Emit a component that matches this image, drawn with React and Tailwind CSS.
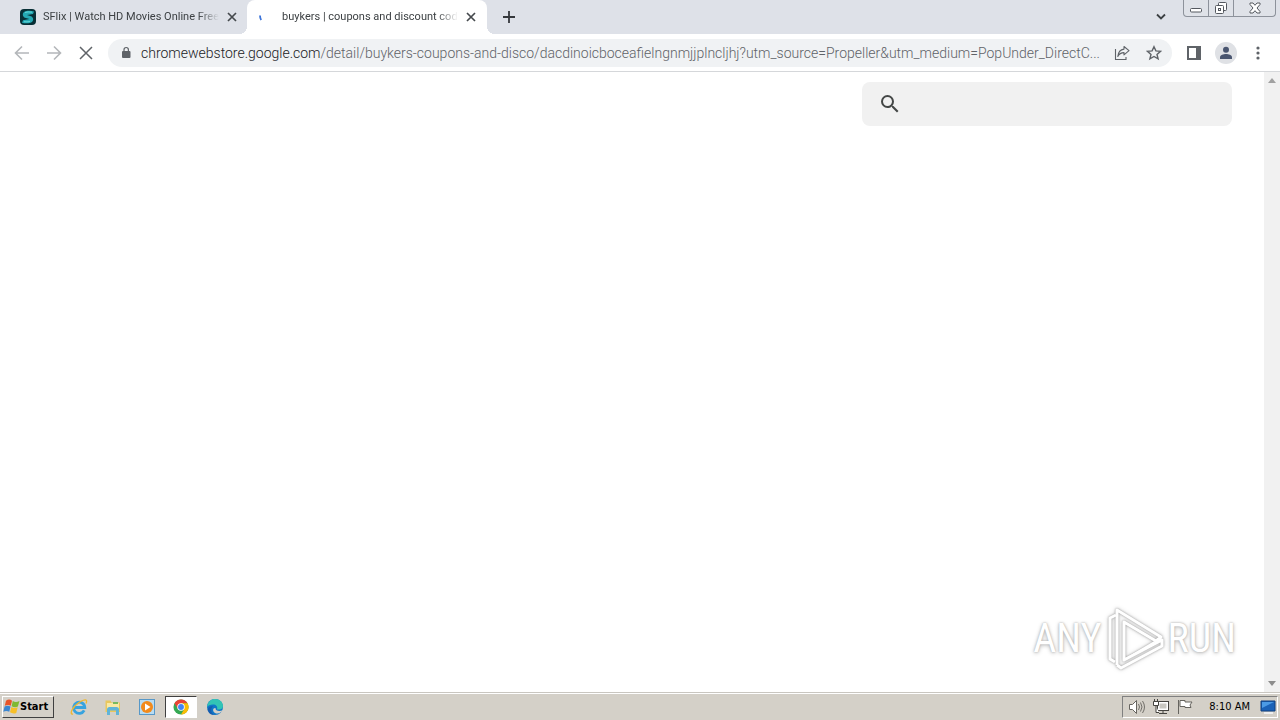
import React from "react";

function Close() {
  return (
    <svg viewBox="0 0 10 10" className="size-[10px]" fill="none" stroke="#45494d" strokeWidth="1.7">
      <path d="M1 1l8 8M9 1l-8 8" />
    </svg>
  );
}

function Tab({ title, icon, active, className }) {
  return (
    <div className={`relative flex h-full items-center ${active ? "rounded-t-lg bg-white" : ""} ${className}`}>
      {active && (
        <>
          <span className="absolute bottom-0 -left-2 size-2 bg-[radial-gradient(circle_at_0_0,transparent_8px,white_8px)]" />
          <span className="absolute bottom-0 -right-2 size-2 bg-[radial-gradient(circle_at_100%_0,transparent_8px,white_8px)]" />
        </>
      )}
      <span className="flex w-4 shrink-0 justify-center">{icon}</span>
      <button
        role="tab"
        aria-selected={!!active}
        className="ml-[7px] w-44 overflow-hidden whitespace-nowrap text-left text-[11px] leading-4 text-[#3c4043] [mask-image:linear-gradient(to_right,black_88%,transparent)]"
      >
        {title}
      </button>
      <button aria-label="Close tab" className="ml-2 flex size-[10px] items-center justify-center">
        <Close />
      </button>
    </div>
  );
}

function SflixIcon() {
  return (
    <svg viewBox="0 0 16 16" className="size-4">
      <rect width="16" height="16" rx="4" fill="#082f36" />
      <path d="M14 2.500C11 1.500 8 1.700 5.500 2.200 2 3 2 7.500 5 8.700L9.500 10 3 11.200 2 13.700c3 .8 6 .6 8.500 0 3.500-1 3.500-5.300.5-6.500L7 6l6-1z" fill="#25a9b4" />
      <path d="M5 3.500q3-1 7-.3M4 12.700q3 .4 6-.2" stroke="#73e0df" strokeWidth=".8" fill="none" />
    </svg>
  );
}

function WindowControls() {
  return (
    <div className="mr-1 flex h-[17px] self-start rounded-b border border-t-0 border-[#8d929b] bg-[#dfe2e8]">
      <button aria-label="Minimize" className="flex w-6 items-center justify-center">
        <svg viewBox="0 0 24 16" className="h-4 w-6" fill="#fff" stroke="#54585f">
          <rect x="6.500" y="8.500" width="11" height="3.500" rx="1" />
        </svg>
      </button>
      <button aria-label="Restore" className="flex w-[26px] items-center justify-center border-x border-[#8d929b]">
        <svg viewBox="0 0 14 14" className="size-[14px]" fill="#fff" stroke="#54585f">
          <rect x="4.500" y="1.500" width="8" height="8" rx="1" />
          <rect x="1.500" y="4.500" width="8" height="8" rx="1" />
          <rect x="4.500" y="7.500" width="2" height="2" />
        </svg>
      </button>
      <button aria-label="Close" className="flex w-[41px] items-center justify-center">
        <svg viewBox="0 0 14 12" className="h-3 w-[14px]" fill="#fff" stroke="#54585f">
          <path d="M2 1h3L7 3.300 9 1h3v1.500L9 6l3 3.500V11H9L7 8.700 5 11H2V9.500L5 6 2 2.500z" />
        </svg>
      </button>
    </div>
  );
}

function Toolbar() {
  return (
    <div className="flex h-[38px] items-center border-b border-[#d5d7da] bg-white pl-[14px] pr-[14px] text-[#5f6368]">
      <button aria-label="Back">
        <svg viewBox="0 0 16 16" className="size-4" fill="none" stroke="#b4b7ba" strokeWidth="1.600"><path d="M15 8H2M8 1.500L1.500 8 8 14.500" /></svg>
      </button>
      <button aria-label="Forward" className="ml-4">
        <svg viewBox="0 0 16 16" className="size-4" fill="none" stroke="#b4b7ba" strokeWidth="1.600"><path d="M1 8h13M8 1.500L14.500 8 8 14.500" /></svg>
      </button>
      <button aria-label="Stop loading" className="ml-4">
        <svg viewBox="0 0 16 16" className="size-4" fill="none" stroke="#5f6368" strokeWidth="1.500"><path d="M2 2l12 12M14 2L2 14" /></svg>
      </button>
      <div className="ml-[14px] flex h-7 min-w-0 flex-1 items-center rounded-full bg-[#f0f2f4] pl-3 pr-[10px]">
        <svg viewBox="0 0 12 14" className="h-[14px] w-3 shrink-0">
          <rect x="2" y="5" width="8.500" height="7" rx="1" fill="#5f6368" />
          <path d="M4 5.500V3.700a2.200 2.200 0 0 1 4.400 0v1.800" fill="none" stroke="#5f6368" strokeWidth="1.200" />
        </svg>
        <div className="ml-[9px] min-w-0 flex-1 truncate text-sm font-light text-[#5f6368]">
          <span className="text-[#202124]">chromewebstore.google.com</span>
          /detail/buykers-coupons-and-disco/dacdinoicboceafielngnmjjplncljhj?utm_source=Propeller&amp;utm_medium=PopUnder_DirectC...
        </div>
        <button aria-label="Share" className="ml-2">
          <svg viewBox="0 0 16 16" className="size-4" fill="none" stroke="#5f6368" strokeWidth="1.100">
            <path d="M1.500 4v10.500h10.500V12" />
            <path d="M10 1.500l5 4.200-5 4.200V7.600C7.500 7.600 5 9 3.800 11.500 4.200 7.500 6.500 4.500 10 4.100z" strokeLinejoin="round" />
          </svg>
        </button>
        <button aria-label="Bookmark this tab" className="ml-4">
          <svg viewBox="0 0 16 16" className="size-4" fill="none" stroke="#5f6368" strokeWidth="1.400">
            <path d="M8 1.700l1.900 4.200 4.600.4L11 9.400l1.100 4.500L8 11.500l-4.100 2.400L5 9.400 1.500 6.300l4.600-.4z" />
          </svg>
        </button>
      </div>
      <button aria-label="Side panel" className="ml-[14px]">
        <svg viewBox="0 0 16 16" className="size-4">
          <path d="M1 1h14v14H1zM3 3v10h7V3z" fill="#5f6368" fillRule="evenodd" />
        </svg>
      </button>
      <button aria-label="Profile" className="ml-[13px]">
        <svg viewBox="0 0 22 22" className="size-[22px]">
          <circle cx="11" cy="11" r="11" fill="#dfe1e5" />
          <circle cx="11" cy="7.800" r="3" fill="#4a5670" />
          <path d="M5 17v-1.700c0-2.200 3.500-3.300 6-3.300s6 1.100 6 3.300V17z" fill="#4a5670" />
        </svg>
      </button>
      <button aria-label="Menu" className="ml-[13px]">
        <svg viewBox="0 0 16 16" className="size-4" fill="#5f6368">
          <circle cx="8" cy="3" r="1.600" /><circle cx="8" cy="8" r="1.600" /><circle cx="8" cy="13" r="1.600" />
        </svg>
      </button>
    </div>
  );
}

function Watermark() {
  const word = "font-['Roboto_Condensed','Open_Sans_Condensed',sans-serif] text-[40px] leading-10 text-white [text-shadow:0_0_2px_#aaa,0_1px_4px_#bbb]";
  return (
    <div className="absolute bottom-5 right-11 flex items-center">
      <span className={word}>ANY</span>
      <svg viewBox="0 0 66 66" className="size-[66px] [filter:drop-shadow(0_0_1px_#999)_drop-shadow(0_0_2px_#ddd)]" fill="none" stroke="#fff" strokeWidth="3" strokeLinejoin="round">
        <path d="M14 9l-6 3v41l5 3" />
        <path d="M15 59V4l44 27-5 4-32-19v38l38-20v6L19 62l-4-3" />
        <path d="M22 16l32 19-32 19z" strokeWidth="2" />
      </svg>
      <span className={word}>RUN</span>
    </div>
  );
}

function Taskbar() {
  const item = "flex h-[22px] w-8 items-center justify-center";
  return (
    <footer className="flex h-7 items-center border-t border-[#c9c6c0] bg-[#d4d0c8] pl-[2px] pr-[2px] shadow-[inset_0_1px_0_white]">
      <button className="flex h-[22px] w-[52px] items-center border border-white border-b-[#404040] border-r-[#404040] font-['DejaVu_Sans_Condensed','DejaVu_Sans',sans-serif] text-[11px] font-bold text-black">
        <svg viewBox="0 0 16 16" className="size-[17px]">
          <path d="M2.800 2.500q3-2 5.700 0L7.300 7.300q-2.500-1.500-5.600 0z" fill="#e8552a" />
          <path d="M9.200 2.800q2.800 2 6.300 0L14 8q-2.800 1.500-5.900-.3z" fill="#7fb932" />
          <path d="M1.500 8q2.800-1.400 5.600 0l-1.200 5q-2.800-1.600-5.600 0z" fill="#3b86d1" />
          <path d="M7.900 8.500q2.900 1.600 5.900.2L12.500 14q-2.800 1.400-5.900-.5z" fill="#f7bf27" />
        </svg>
        <span className="pt-px">Start</span>
      </button>
      <nav className="ml-[9px] flex gap-[2px]">
        <button aria-label="Internet Explorer" className={item}>
          <svg viewBox="0 0 18 18" className="size-[18px]" fill="none">
            <path d="M14.200 12.300A5.600 5.600 0 1 1 14.800 9.500H4.500" stroke="#37a3df" strokeWidth="2.800" />
            <path d="M3 16C-1 17 2 9 9 4.500 15 .8 18 1 16 5.500" stroke="#efb72f" strokeWidth="1.300" />
          </svg>
        </button>
        <button aria-label="File Explorer" className={item}>
          <svg viewBox="0 0 18 18" className="size-[18px]">
            <path d="M1.500 2.500h5l1 2H16V14H1.500z" fill="#e9c75d" />
            <path d="M3 5h12v7H3z" fill="#f9e9a4" />
            <path d="M9 4h5v2H9z" fill="#79b95f" />
            <path d="M3 17v-5.500q0-2.500 2.500-2.500h7Q15 9 15 11.500V17h-3v-4.500H6V17z" fill="#61b4d8" />
          </svg>
        </button>
        <button aria-label="Media Player" className={item}>
          <svg viewBox="0 0 18 18" className="size-[18px]">
            <rect x="1.500" y="1.500" width="15" height="15" fill="#b8dcf2" stroke="#5798c8" />
            <circle cx="9" cy="9" r="6" fill="#f28a1b" />
            <path d="M7 5.500L12.500 9 7 12.500z" fill="#fff" />
          </svg>
        </button>
        <button aria-label="Chrome" className={`${item} border border-[#404040] border-b-white border-r-white bg-white`}>
          <svg viewBox="0 0 18 18" className="size-4">
            <circle cx="9" cy="9" r="8.500" fill="#34a853" />
            <path d="M1.600 4.750A8.500 8.500 0 0 1 16.400 4.750H9L5.500 11z" fill="#ea4335" />
            <path d="M16.400 4.750A8.500 8.500 0 0 1 9 17.500l3.500-6L9 4.750z" fill="#fbbc04" />
            <circle cx="9" cy="9" r="4.200" fill="#fff" />
            <circle cx="9" cy="9" r="3.300" fill="#4285f4" />
          </svg>
        </button>
        <button aria-label="Edge" className={item}>
          <svg viewBox="0 0 18 18" className="size-[18px]">
            <circle cx="9" cy="9" r="8" fill="#0f76c7" />
            <path d="M1 9C2 3 5.500 1 9 1c5 0 8 3.500 8 7 0 3-3 4-6 3.500 1-3-1-5-4-5-3 0-5 1-6 2.500z" fill="#32c4b5" />
            <path d="M17 12c-3 1.800-8 1-7.500-2C7 9.500 6 13 9 15c3 1.500 6 0 8-3z" fill="#d4d0c8" />
            <path d="M9 17C5 16 4 11 7 8 3 8 1 11 2 13c1 3 4 4 7 4z" fill="#155caf" />
          </svg>
        </button>
      </nav>
      <div className="ml-auto flex h-[22px] items-center border border-[#808080] border-b-white border-r-white pl-[5px]">
        <svg viewBox="0 0 18 18" className="size-[18px]" fill="#fff" stroke="#66645f">
          <path d="M1.500 6.500h3l4-4v13l-4-4h-3z" />
          <path d="M10.500 6q2 3 0 6M12.500 4.500q3 4.500 0 9M14.500 3q4 6 0 12" fill="none" strokeWidth=".9" />
        </svg>
        <svg viewBox="0 0 18 18" className="ml-[6px] size-[18px]" fill="#fff" stroke="#45433f">
          <rect x="5.500" y="3.500" width="11" height="9" fill="#fff" />
          <rect x="7.500" y="5.500" width="7" height="5" fill="#c9c7c1" stroke="none" />
          <path d="M7 15.500h8M11 13v2" />
          <path d="M1.500 3.500h5v4h-5zM2.500 1v2M5.500 1v2M4 8v6.500h3" />
        </svg>
        <svg viewBox="0 0 18 18" className="ml-[6px] size-[18px]" fill="#fff" stroke="#66645f">
          <path d="M2.500 16V2M4 2.500h5v1.500h7l-2 3 1 2.500H9V8.500H4z" />
        </svg>
        <time className="ml-[15px] whitespace-nowrap pt-px font-['DejaVu_Sans_Condensed','DejaVu_Sans',sans-serif] text-[11px] text-black">8:10 AM</time>
        <svg viewBox="0 0 18 18" className="ml-[9px] size-[18px]">
          <path d="M2 3h14v10H2z" fill="#1b62b7" stroke="#113e7c" />
          <path d="M3 4h12L3 10z" fill="#4c9be5" />
          <path d="M5 15h9" stroke="#eee" strokeWidth="2" />
        </svg>
      </div>
    </footer>
  );
}

export default function App() {
  return (
    <div className="flex h-screen flex-col bg-white font-[Roboto,'Noto_Sans',sans-serif]">
      <header>
        <div className="flex h-[34px] items-center bg-[#dee1e8]">
          <div role="tablist" className="flex h-full items-center">
            <Tab title="SFlix | Watch HD Movies Online Free" icon={<SflixIcon />} className="w-[247px] pl-5" />
            <Tab
              active
              title="buykers | coupons and discount code"
              className="w-60 pl-3"
              icon={
                <svg viewBox="0 0 16 16" className="size-4" fill="none" stroke="#3b73d9" strokeWidth="1.800">
                  <path d="M1 6.500q0 2.500 1.200 4.500" />
                </svg>
              }
            />
          </div>
          <button aria-label="New tab" className="ml-4">
            <svg viewBox="0 0 12 12" className="size-3" fill="none" stroke="#35383c" strokeWidth="1.800"><path d="M6 0v12M0 6h12" /></svg>
          </button>
          <button aria-label="Search tabs" className="ml-auto mr-[17px]">
            <svg viewBox="0 0 10 8" className="h-2 w-[10px]" fill="none" stroke="#3c4043" strokeWidth="1.800"><path d="M1 1.500l4 4 4-4" /></svg>
          </button>
          <WindowControls />
        </div>
        <Toolbar />
      </header>
      <main className="relative flex min-h-0 flex-1">
        <div className="flex flex-1 items-start justify-end pr-8 pt-[10px]">
          <label className="flex h-11 w-[370px] items-center rounded-lg bg-[#f1f1f1] pl-4">
            <svg viewBox="0 0 24 24" className="size-6" fill="#444746">
              <path d="M15.500 14h-.79l-.28-.27A6.470 6.470 0 0 0 16 9.500 6.500 6.500 0 1 0 9.500 16c1.610 0 3.090-.59 4.230-1.570l.27.28v.79l5 4.990L20.490 19l-4.990-5zm-6 0C7.010 14 5 11.990 5 9.500S7.010 5 9.500 5 14 7.010 14 9.500 11.990 14 9.500 14z" />
            </svg>
            <input aria-label="Search" className="ml-4 min-w-0 flex-1 bg-transparent pr-4 text-base outline-none" />
          </label>
        </div>
        <div className="flex w-4 flex-col items-center justify-between bg-[#f1f1f1] py-[6px]">
          <svg viewBox="0 0 8 5" className="h-[5px] w-2" fill="#a1a1a1"><path d="M0 5l4-5 4 5z" /></svg>
          <svg viewBox="0 0 8 5" className="h-[5px] w-2" fill="#8d8d8d"><path d="M0 0l4 5 4-5z" /></svg>
        </div>
        <Watermark />
      </main>
      <Taskbar />
    </div>
  );
}
